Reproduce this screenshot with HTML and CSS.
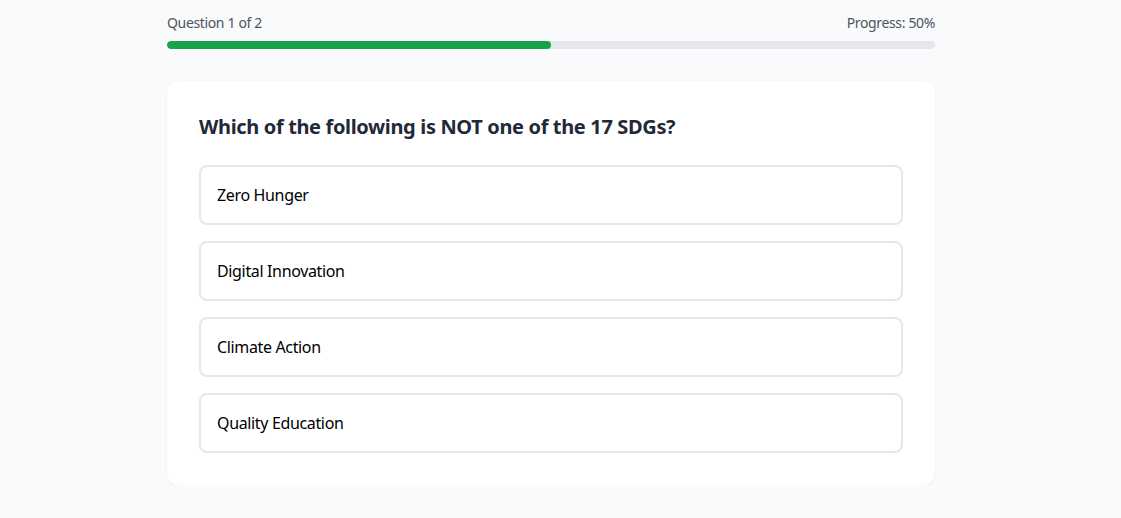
FILE: index.html
```html
<!DOCTYPE html>
<html lang="en">
<head>
<meta charset="utf-8">
<title>Quiz</title>
<link rel="stylesheet" href="styles.css">
</head>
<body>
<main class="quiz">
  <div class="meta">
    <span>Question 1 of 2</span>
    <span>Progress: 50%</span>
  </div>
  <div class="track"><div class="fill" style="width:50%"></div></div>
  <section class="card">
    <h2 class="question">Which of the following is NOT one of the 17 SDGs?</h2>
    <div class="options">
      <button class="option">Zero Hunger</button>
      <button class="option">Digital Innovation</button>
      <button class="option">Climate Action</button>
      <button class="option">Quality Education</button>
    </div>
  </section>
</main>
</body>
</html>
```

FILE: styles.css
```css
* { box-sizing: border-box; }
html, body { margin: 0; }
body {
  background: #f9fafb;
  font-family: "Noto Sans", "Open Sans", sans-serif;
  color: #111827;
  padding-right: 19px;
  letter-spacing: -0.35px;
}
.quiz {
  width: 768px;
  margin: 0 auto;
  padding-top: 13px;
}
.meta {
  display: flex;
  justify-content: space-between;
  font-size: 14px;
  line-height: 20px;
  color: #4b5563;
  margin-bottom: 8px;
}
.track {
  height: 8px;
  background: #e5e7eb;
  border-radius: 9999px;
  overflow: hidden;
}
.fill {
  height: 100%;
  background: #16a34a;
  border-radius: 9999px;
}
.card {
  margin-top: 32px;
  background: #fff;
  border-radius: 12px;
  padding: 32px;
  box-shadow: 0 1px 3px rgba(0,0,0,0.04), 0 1px 2px rgba(0,0,0,0.03);
}
.question {
  margin: 0 0 24px;
  font-size: 20px;
  line-height: 28px;
  font-weight: 700;
  color: #1f2937;
}
.options {
  display: flex;
  flex-direction: column;
  gap: 16px;
}
.option {
  display: block;
  width: 100%;
  text-align: left;
  font: inherit;
  font-size: 16px;
  line-height: 24px;
  letter-spacing: -0.35px;
  color: #000;
  background: #fff;
  border: 2px solid #e5e7eb;
  border-radius: 8px;
  padding: 16px;
  cursor: pointer;
}
```
